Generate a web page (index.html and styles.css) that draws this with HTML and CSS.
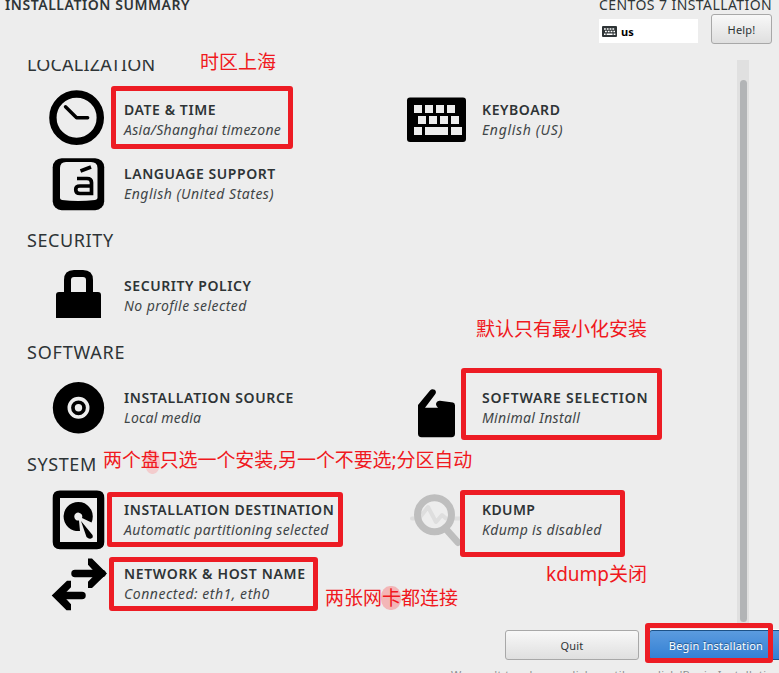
FILE: index.html
```html
<!DOCTYPE html>
<html lang="en">
<head>
<meta charset="utf-8">
<title>Installation Summary</title>
<link rel="stylesheet" href="styles.css">
</head>
<body>
<div class="window">
  <header class="header">
    <h1 class="title">INSTALLATION SUMMARY</h1>
    <div class="product">
      <div class="product-name">CENTOS 7 INSTALLATION</div>
      <div class="tools">
        <div class="layout">
          <svg width="15" height="11" viewBox="0 0 15 11"><rect width="15" height="11" rx="1" fill="#2e3436"/><path d="M2 3h11M3 5.5h10" stroke="#fff" stroke-width="1.6" stroke-dasharray="1.8 1"/><path d="M2 8.2h1.6M4.6 8.2h6M11.6 8.2h1.8" stroke="#fff" stroke-width="1.5"/></svg>
          <b>us</b>
        </div>
        <button class="btn help">Help!</button>
      </div>
    </div>
  </header>

  <main class="scroller">
    <div class="content">
      <section class="group">
        <h2 class="w-localization">LOCALIZATION</h2>
        <div class="spokes">
          <div class="spoke">
            <svg class="icon" viewBox="0 0 60 64"><circle cx="28.6" cy="29.7" r="23.7" fill="none" stroke="#000" stroke-width="7.4"/><path d="M17.5 18.7L28.6 29.7H39.7" fill="none" stroke="#000" stroke-width="3.4" stroke-linecap="round" stroke-linejoin="round"/></svg>
            <div><h3>DATE &amp; TIME</h3><p class="w-zone">Asia/Shanghai timezone</p></div>
          </div>
          <div class="spoke">
            <svg class="icon" viewBox="0 0 60 64"><rect x="1" y="9.6" width="59" height="44.4" rx="3"/><path fill="#ededed" d="M8 17h8v8H8zM19 17h8v8h-8zM30 17h8v8h-8zM41 17h8v8h-8zM12 28h8v8h-8zM23 28h8v8h-8zM34 28h8v8h-8zM45 28h8v8h-8zM8 39h8v8H8zM19 39h23v8H19zM45 39h11v8H45z"/></svg>
            <div><h3>KEYBOARD</h3><p class="w-us">English (US)</p></div>
          </div>
          <div class="spoke">
            <svg class="icon" viewBox="0 0 60 64"><rect x="4.7" y="6.2" width="51.5" height="52" rx="9"/><path fill="#ededed" d="M18 10H43Q49.500 10 49.500 16V46Q49.500 47.500 47 48Q30 50 14 48Q12 47.500 12 46V16Q12 10 18 10Z"/><path d="M32.500 19L43 15" fill="none" stroke="#000" stroke-width="3.600"/><path d="M29 26.500H39Q43.500 26.500 43.500 30.500V41.500H32Q27.800 41.500 27.800 38V37Q27.800 34 32 34H43" fill="none" stroke="#000" stroke-width="3.700"/></svg>
            <div><h3>LANGUAGE SUPPORT</h3><p class="w-uss">English (United States)</p></div>
          </div>
        </div>
      </section>

      <section class="group">
        <h2>SECURITY</h2>
        <div class="spokes">
          <div class="spoke">
            <svg class="icon" viewBox="0 0 60 64"><path fill-rule="evenodd" d="M8 54V31Q8 28 11 28H16V16Q16 6 26 6H35Q45 6 45 16V28H50Q53 28 53 31V54ZM23 28H38V16Q38 13 35 13H26Q23 13 23 16Z"/></svg>
            <div><h3>SECURITY POLICY</h3><p class="w-profile">No profile selected</p></div>
          </div>
        </div>
      </section>

      <section class="group">
        <h2 class="w-software">SOFTWARE</h2>
        <div class="spokes">
          <div class="spoke">
            <svg class="icon" viewBox="0 0 60 64"><circle cx="30.500" cy="31.800" r="25.700"/><circle cx="30.500" cy="31.800" r="9.200" fill="none" stroke="#ededed" stroke-width="3.600"/><circle cx="30.500" cy="31.800" r="3.700" fill="#ededed"/></svg>
            <div><h3 class="w-source">INSTALLATION SOURCE</h3><p class="w-local">Local media</p></div>
          </div>
          <div class="spoke">
            <svg class="icon" viewBox="0 0 60 64"><path d="M12 29L24 14.500Q26 12.200 28.700 13.800Q31 15.800 29 18.500L19 31.700H32Q29 29 30.500 26.500Q31.500 24.500 34 24.700L47 26.500Q49 27 49 29.500V57.500Q49 61.300 45.500 61.300H15.500Q12 61.300 12 57.500Z"/></svg>
            <div><h3 class="w-selection">SOFTWARE SELECTION</h3><p>Minimal Install</p></div>
          </div>
        </div>
      </section>

      <section class="group">
        <h2>SYSTEM</h2>
        <div class="spokes">
          <div class="spoke">
            <svg class="icon" viewBox="0 0 60 64"><path fill-rule="evenodd" d="M12 2.600H49Q56.300 2.600 56.300 10V54Q56.300 61.300 49 61.300H12Q4.700 61.300 4.700 54V10Q4.700 2.600 12 2.600ZM12 10V54H49V10Z"/><path d="M32 43A14.600 14.600 0 1 1 43.500 34.500L34 30A4 4 0 1 0 31 32.500Z"/><path d="M33 33L44.500 47Q45.500 50 43 50.500Q41 51.500 38.500 49Z"/></svg>
            <div><h3>INSTALLATION DESTINATION</h3><p>Automatic partitioning selected</p></div>
          </div>
          <div class="spoke">
            <svg class="icon" viewBox="0 0 60 64"><path d="M6 30.500H13L22 19L30 34L36 27L40 30.500H57" fill="none" stroke="#dedede" stroke-width="4" stroke-linecap="round" stroke-linejoin="round"/><circle cx="28.500" cy="26.700" r="17" fill="none" stroke="#bebebe" stroke-width="7"/><path d="M39 40L52 54.500" stroke="#bebebe" stroke-width="7" stroke-linecap="round"/></svg>
            <div><h3 class="w-kdump">KDUMP</h3><p>Kdump is disabled</p></div>
          </div>
          <div class="spoke">
            <svg class="icon" viewBox="0 0 60 64"><path d="M27 21.400H54M11 43.400H34" stroke="#000" stroke-width="7.500" stroke-linecap="round"/><path d="M40 6.400H44L59 21.400L44 36H40V29.700L48 21.400L40 12.700ZM23 28.700H19L3.700 43.400L18.500 58.200H23V52.200L15 43.400L23 35.200Z"/></svg>
            <div><h3 class="w-net">NETWORK &amp; HOST NAME</h3><p class="w-eth">Connected: eth1, eth0</p></div>
          </div>
        </div>
      </section>
    </div>
    <div class="track"><div class="thumb"></div></div>
  </main>

  <footer class="footer">
    <div class="actions">
      <button class="btn quit">Quit</button>
      <button class="btn begin">Begin Installation</button>
    </div>
    <p class="hint">We won't touch your disks until you click 'Begin Installation'.</p>
  </footer>

  <i class="smudge smudge-disk"></i>
  <i class="smudge smudge-card"></i>
  <div class="box box-date"></div>
  <div class="box box-software"></div>
  <div class="box box-dest"></div>
  <div class="box box-kdump"></div>
  <div class="box box-network"></div>
  <div class="box box-begin"></div>
  <div class="note note-date">时区上海</div>
  <div class="note note-software">默认只有最小化安装</div>
  <div class="note note-disk">两个盘只选一个安装,另一个不要选;分区自动</div>
  <div class="note note-kdump">kdump关闭</div>
  <div class="note note-network">两张网卡都连接</div>
</div>
</body>
</html>
```
FILE: styles.css
```css
* { box-sizing: border-box; }
body { margin: 0; }
h1, h2, h3, p { margin: 0; }

.window {
  position: relative;
  display: flex;
  flex-direction: column;
  width: 779px;
  height: 673px;
  overflow: hidden;
  background: #ededed;
  color: #2e3436;
  font-family: "Noto Sans", "Open Sans", sans-serif;
  white-space: nowrap;
}

.header {
  display: flex;
  flex: none;
  justify-content: space-between;
  height: 60px;
  padding: 0 7px 0 5px;
}
.title { margin-top: -5px; font-size: 14px; line-height: 20px; font-weight: 600; letter-spacing: .55px; }
.product { width: 173px; }
.product-name { margin-top: -5px; font-size: 14px; line-height: 20px; letter-spacing: .42px; }
.tools { display: flex; justify-content: space-between; align-items: flex-start; margin-top: -1px; }
.layout {
  display: flex;
  align-items: center;
  gap: 4px;
  width: 99px;
  height: 24px;
  margin-top: 5px;
  padding-left: 3px;
  background: #fff;
  color: #000;
  font-size: 11px;
}

.btn {
  flex: none;
  padding: 0;
  border: 1px solid #a8a8a8;
  border-radius: 3px;
  background: linear-gradient(#f8f8f8, #dfdfdf);
  color: #2e3436;
  font: 11px/1 "Noto Sans", sans-serif;
  letter-spacing: .2px;
}
.help { width: 61px; height: 30px; }

.scroller { display: flex; flex: none; height: 563px; padding-left: 27px; overflow: hidden; }
.content { display: flex; flex-direction: column; gap: 12px; width: 710px; margin-top: -8px; }
.group h2 { height: 24px; margin-bottom: 12px; font-size: 18px; line-height: 24px; font-weight: 400; letter-spacing: .6px; }
.spokes { display: grid; grid-template-columns: 358px 1fr; padding-left: 21px; }
.spoke { display: flex; align-items: center; gap: 16px; height: 64px; }
.icon { flex: none; width: 60px; height: 64px; }
.spoke h3 { font-size: 14px; line-height: 20px; font-weight: 600; letter-spacing: .57px; }
.spoke p { color: #3f4547; font-size: 14px; line-height: 20px; font-style: italic; letter-spacing: .34px; }

/* Tracking per label */
.group .w-localization { letter-spacing: .2px; }
.group .w-software { letter-spacing: .8px; }
.spoke .w-source { letter-spacing: .63px; }
.spoke .w-selection { letter-spacing: .8px; }
.spoke .w-kdump { letter-spacing: .4px; }
.spoke .w-net { letter-spacing: .66px; }
.spoke .w-us { letter-spacing: .67px; }
.spoke .w-uss { letter-spacing: .5px; }
.spoke .w-profile { letter-spacing: .42px; }
.spoke .w-local { letter-spacing: .2px; }
.spoke .w-eth { letter-spacing: .52px; }

.track { width: 12px; padding: 20px 2px 0 3px; background: #e0e0e0; }
.thumb { height: 542px; border-radius: 4px; background: #b2b4b6; }

.footer { flex: none; padding-top: 7px; }
.actions { display: flex; gap: 10px; padding-left: 505px; }
.quit { width: 134px; height: 30px; }
.begin {
  width: 134px;
  height: 30px;
  border-color: #1c5187;
  background: linear-gradient(#5b9bdf, #3380d4);
  box-shadow: 0 -1px #fff;
  color: #fff;
  text-shadow: 0 -1px 1px #1f4f80;
}
.hint { margin-top: 7px; padding-left: 451px; color: #8c8e8f; font-size: 11px; line-height: 15px; letter-spacing: .42px; }

.box { position: absolute; border: 5px solid #ed1c24; border-radius: 3px; }
.box-date { left: 111px; top: 86px; width: 182px; height: 63px; }
.box-software { left: 461px; top: 368px; width: 201px; height: 72px; }
.box-dest { left: 107px; top: 492px; width: 236px; height: 55px; }
.box-kdump { left: 460px; top: 490px; width: 165px; height: 67px; }
.box-network { left: 109px; top: 557px; width: 209px; height: 54px; }
.box-begin { left: 645px; top: 623px; width: 128px; height: 40px; }

.smudge { position: absolute; background: #f3b6b7; border-radius: 45%; }
.smudge-disk { left: 145px; top: 450px; width: 15px; height: 24px; background: #f3cccd; }
.smudge-card { left: 381px; top: 586px; width: 20px; height: 24px; }

.note {
  position: absolute;
  color: #f01820;
  font: 400 19px/28px "Noto Sans", "Noto Sans CJK SC", sans-serif;
}
.note-date { left: 200px; top: 48px; }
.note-software { left: 476px; top: 315px; }
.note-disk { left: 103px; top: 446px; letter-spacing: -.1px; }
.note-kdump { left: 546px; top: 560px; }
.note-network { left: 325px; top: 584px; }
```
